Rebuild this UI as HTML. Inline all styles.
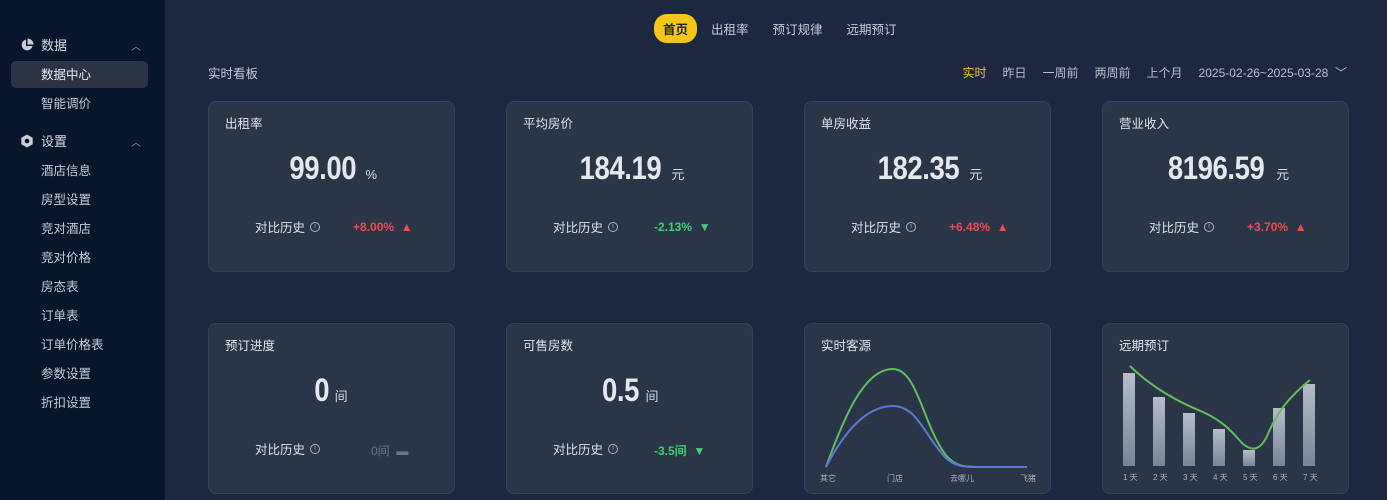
<!DOCTYPE html>
<html><head><meta charset="utf-8"><style>
*{margin:0;padding:0;box-sizing:border-box}
body{width:1387px;height:500px;overflow:hidden;background:#1c2740;font-family:"Liberation Sans","Noto Sans CJK SC",sans-serif;color:#c9d0db;position:relative}
.side{position:absolute;left:0;top:0;width:165px;height:500px;background:#07162a}
.grp{position:absolute;left:20px;font-size:13px;color:#d5dbe4;display:flex;align-items:center}
.grp .ic{width:14px;height:14px;margin-right:7px}
.car{position:absolute;left:131px;font-size:10px;color:#9aa4b2}
.it{position:absolute;left:41px;font-size:12.5px;color:#c3cad5}
.act{position:absolute;left:11px;top:61px;width:137px;height:27px;background:#2a3444;border-radius:5px}
.nav{position:absolute;top:14px;left:654px;display:flex;font-size:12.5px;color:#c3cad5;align-items:center}
.nav span{margin-right:24px}
.nav .on{background:#f5c518;color:#1b2233;border-radius:13px;padding:5px 9px;margin-right:14px;font-weight:bold}
.h{position:absolute;left:208px;top:63px;font-size:12.5px;color:#c3cad5}
.rng{position:absolute;right:40px;top:64px;font-size:12px;color:#b9c1cc;display:flex}
.rng span{margin-left:16px}
.card{position:absolute;width:247px;height:171px;background:#2a3548;border:1px solid #35415a;border-radius:8px}
.t{position:absolute;left:16px;top:11px;font-size:12.5px;color:#dfe4ea}
.v{position:absolute;left:0;right:0;top:49px;text-align:center;color:#e3e8ee;line-height:34px}
.v b{display:inline-block;font-size:32px;transform:scaleX(0.86);letter-spacing:-0.5px;margin:0 -2px}
.v small{font-weight:normal;font-size:13px;margin-left:6px;color:#d5dbe3}
.cmp{position:absolute;top:115px;left:46px;font-size:12.5px;color:#dbe1e8;display:flex;align-items:center}
.info{display:inline-block;width:10px;height:10px;border:1px solid #aab3bf;border-radius:50%;font-size:7px;line-height:8px;text-align:center;margin-left:5px;color:#aab3bf}
.d{position:absolute;top:118px;font-size:12px;font-weight:bold}
.up{color:#ef4b4b}.dn{color:#3fcf6f}.gr{color:#6a7586}
</style></head><body>
<div class="side">
<div class="grp" style="top:35px"><svg class="ic" viewBox="0 0 14 14"><path d="M6 1.5A5.5 5.5 0 1 0 12.5 8H6z" fill="#c7ccd4"/><path d="M7.5 0.5A6 6 0 0 1 13.5 6.5H7.5z" fill="#c7ccd4"/></svg>数据</div>
<div class="car" style="top:38px">︿</div>
<div class="act"></div>
<div class="it" style="top:64px;color:#e9edf2">数据中心</div>
<div class="it" style="top:93px">智能调价</div>
<div class="grp" style="top:131px"><svg class="ic" viewBox="0 0 14 14"><polygon points="7,0.5 12.7,3.8 12.7,10.2 7,13.5 1.3,10.2 1.3,3.8" fill="#c7ccd4"/><circle cx="7" cy="7" r="2.3" fill="#07162a"/></svg>设置</div>
<div class="car" style="top:134px">︿</div>
<div class="it" style="top:160px">酒店信息</div>
<div class="it" style="top:189px">房型设置</div>
<div class="it" style="top:218px">竞对酒店</div>
<div class="it" style="top:247px">竞对价格</div>
<div class="it" style="top:276px">房态表</div>
<div class="it" style="top:305px">订单表</div>
<div class="it" style="top:334px">订单价格表</div>
<div class="it" style="top:363px">参数设置</div>
<div class="it" style="top:392px">折扣设置</div>
</div>
<div class="nav"><span class="on">首页</span><span>出租率</span><span>预订规律</span><span>远期预订</span></div>
<div class="h">实时看板</div>
<div class="rng"><span style="color:#f5c518">实时</span><span>昨日</span><span>一周前</span><span>两周前</span><span>上个月</span><span>2025-02-26~2025-03-28 &nbsp;﹀</span></div>

<div class="card" style="left:208px;top:101px"><div class="t">出租率</div><div class="v"><b>99.00</b><small>%</small></div><div class="cmp">对比历史<span class="info">i</span></div><div class="d up" style="left:144px">+8.00% &nbsp;▲</div></div>
<div class="card" style="left:506px;top:101px"><div class="t">平均房价</div><div class="v"><b>184.19</b><small>元</small></div><div class="cmp">对比历史<span class="info">i</span></div><div class="d dn" style="left:147px">-2.13% &nbsp;▼</div></div>
<div class="card" style="left:804px;top:101px"><div class="t">单房收益</div><div class="v"><b>182.35</b><small>元</small></div><div class="cmp">对比历史<span class="info">i</span></div><div class="d up" style="left:144px">+6.48% &nbsp;▲</div></div>
<div class="card" style="left:1102px;top:101px"><div class="t">营业收入</div><div class="v"><b>8196.59</b><small>元</small></div><div class="cmp">对比历史<span class="info">i</span></div><div class="d up" style="left:144px">+3.70% &nbsp;▲</div></div>

<div class="card" style="left:208px;top:323px"><div class="t">预订进度</div><div class="v"><b>0</b><small>间</small></div><div class="cmp">对比历史<span class="info">i</span></div><div class="d gr" style="left:162px;font-weight:normal">0间 &nbsp;▬</div></div>
<div class="card" style="left:506px;top:323px"><div class="t">可售房数</div><div class="v"><b>0.5</b><small>间</small></div><div class="cmp">对比历史<span class="info">i</span></div><div class="d dn" style="left:147px">-3.5间 &nbsp;▼</div></div>
<div class="card" style="left:804px;top:323px"><div class="t">实时客源</div>
<svg style="position:absolute;left:0;top:0" width="247" height="171" viewBox="0 0 247 171">
<path d="M21 143 C40 90 60 45 88 45 C112 45 118 100 140 130 C150 143 160 143 175 143 L222 143" fill="none" stroke="#5fbf5b" stroke-width="2"/>
<path d="M21 143 C38 110 60 82 88 82 C112 82 120 112 140 133 C150 143 160 143 175 143 L222 143" fill="none" stroke="#5b78d6" stroke-width="2"/>
<g font-size="8" fill="#aab3bf"><text x="15" y="157">其它</text><text x="82" y="157">门店</text><text x="145" y="157">去哪儿</text><text x="215" y="157">飞猪</text></g></svg></div>
<div class="card" style="left:1102px;top:323px"><div class="t">远期预订</div>
<svg style="position:absolute;left:0;top:0" width="247" height="171" viewBox="0 0 247 171">
<defs><linearGradient id="g" x1="0" y1="0" x2="0" y2="1"><stop offset="0" stop-color="#b5bdc9"/><stop offset="1" stop-color="#7a8496"/></linearGradient></defs>
<g fill="url(#g)"><rect x="20" y="49" width="12" height="93"/><rect x="50" y="73" width="12" height="69"/><rect x="80" y="89" width="12" height="53"/><rect x="110" y="105" width="12" height="37"/><rect x="140" y="126" width="12" height="16"/><rect x="170" y="84" width="12" height="58"/><rect x="200" y="60" width="12" height="82"/></g>
<path d="M27 42 C50 65 80 80 100 88 C125 100 130 110 140 120 C150 128 158 126 165 110 C175 85 190 70 207 56" fill="none" stroke="#5fbf5b" stroke-width="2"/>
<g font-size="8" fill="#aab3bf"><text x="20" y="156">1 天</text><text x="50" y="156">2 天</text><text x="80" y="156">3 天</text><text x="110" y="156">4 天</text><text x="140" y="156">5 天</text><text x="170" y="156">6 天</text><text x="200" y="156">7 天</text></g></svg></div>
</body></html>
